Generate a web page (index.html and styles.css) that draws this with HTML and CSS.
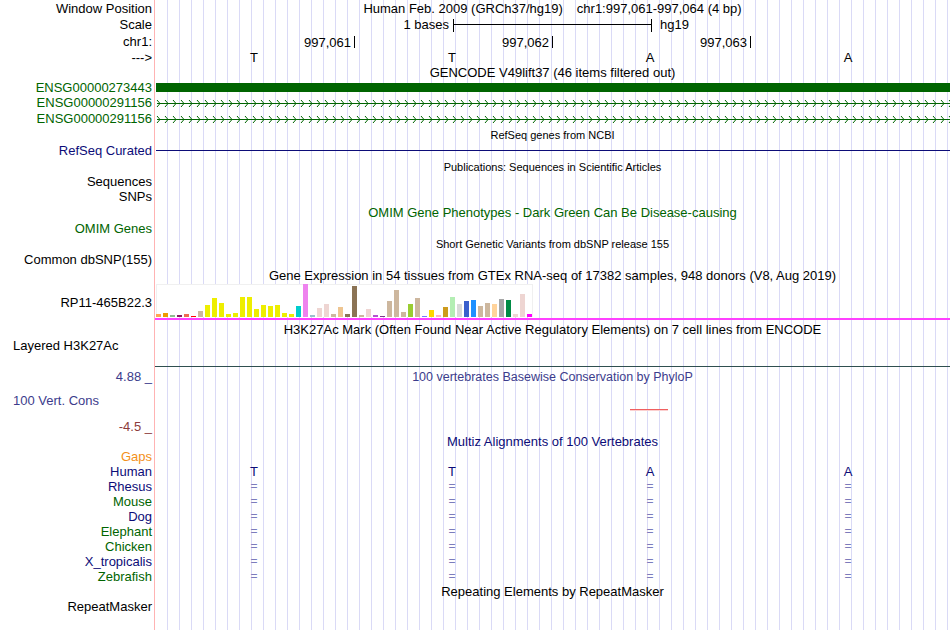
FILE: index.html
```html
<!DOCTYPE html>
<html>
<head>
    <meta charset="utf-8">
    <title>UCSC Genome Browser - chr1:997,061-997,064</title>
    <link rel="stylesheet" href="styles.css">
</head>
<body>
<div class="browser">
    <!-- cabecera: posicion, escala, regla -->
    <div class="row h17">
        <div class="label">Window Position</div>
        <div class="track title">Human Feb. 2009 (GRCh37/hg19)<span class="spacer"></span>chr1:997,061-997,064 (4 bp)</div>
    </div>
    <div class="row h16">
        <div class="label">Scale</div>
        <div class="track scale">
            <span class="scale-text">1 bases</span>
            <div class="scale-bar"></div>
            <span class="scale-db">hg19</span>
        </div>
    </div>
    <div class="row h18">
        <div class="label">chr1:</div>
        <div class="track ruler">
            <div class="pos">997,061<i class="tick"></i></div>
            <div class="pos">997,062<i class="tick"></i></div>
            <div class="pos">997,063<i class="tick"></i></div>
            <div></div>
        </div>
    </div>
    <div class="row h13">
        <div class="label">---&gt;</div>
        <div class="track bases"><span>T</span><span>T</span><span>A</span><span>A</span></div>
    </div>

    <!-- GENCODE -->
    <div class="row h17">
        <div class="label"></div>
        <div class="track title">GENCODE V49lift37 (46 items filtered out)</div>
    </div>
    <div class="row h14">
        <div class="label green">ENSG00000273443</div>
        <div class="track"><div class="gene-block"></div></div>
    </div>
    <div class="row h16">
        <div class="label green">ENSG00000291156</div>
        <div class="track">
            <svg class="gene-line" width="795" height="16">
                <defs>
                    <pattern id="chevrons" width="8" height="16" patternUnits="userSpaceOnUse">
                        <polyline points="2,5 5,8.5 2,12" fill="none" stroke="#006400" stroke-width="1"/>
                    </pattern>
                </defs>
                <rect x="2" y="8" width="793" height="1" fill="#006400"/>
                <rect x="0" y="0" width="795" height="16" fill="url(#chevrons)"/>
            </svg>
        </div>
    </div>
    <div class="row h16">
        <div class="label green">ENSG00000291156</div>
        <div class="track">
            <svg class="gene-line" width="795" height="16">
                <rect x="2" y="8" width="793" height="1" fill="#006400"/>
                <rect x="0" y="0" width="795" height="16" fill="url(#chevrons)"/>
            </svg>
        </div>
    </div>

    <!-- RefSeq -->
    <div class="row h16">
        <div class="label"></div>
        <div class="track title small">RefSeq genes from NCBI</div>
    </div>
    <div class="row h16">
        <div class="label navy">RefSeq Curated</div>
        <div class="track"><div class="refseq-line"></div></div>
    </div>

    <!-- Publications -->
    <div class="row h16">
        <div class="label"></div>
        <div class="track title small">Publications: Sequences in Scientific Articles</div>
    </div>
    <div class="row h14">
        <div class="label">Sequences</div>
        <div class="track"></div>
    </div>
    <div class="row h16">
        <div class="label">SNPs</div>
        <div class="track"></div>
    </div>

    <!-- OMIM -->
    <div class="row h16">
        <div class="label"></div>
        <div class="track title green">OMIM Gene Phenotypes - Dark Green Can Be Disease-causing</div>
    </div>
    <div class="row h15">
        <div class="label green">OMIM Genes</div>
        <div class="track"></div>
    </div>

    <!-- dbSNP -->
    <div class="row h16">
        <div class="label"></div>
        <div class="track title small">Short Genetic Variants from dbSNP release 155</div>
    </div>
    <div class="row h15">
        <div class="label">Common dbSNP(155)</div>
        <div class="track"></div>
    </div>

    <!-- GTEx -->
    <div class="row h17">
        <div class="label"></div>
        <div class="track title">Gene Expression in 54 tissues from GTEx RNA-seq of 17382 samples, 948 donors (V8, Aug 2019)</div>
    </div>
    <div class="row h37">
        <div class="label">RP11-465B22.3</div>
        <div class="track">
            <div class="gtex-plot" id="gtexPlot"></div>
            <div class="gtex-line"></div>
        </div>
    </div>

    <!-- H3K27Ac -->
    <div class="row h18">
        <div class="label"></div>
        <div class="track title">H3K27Ac Mark (Often Found Near Active Regulatory Elements) on 7 cell lines from ENCODE</div>
    </div>
    <div class="row h28">
        <div class="label left">Layered H3K27Ac</div>
        <div class="track h3k27ac"></div>
    </div>

    <!-- Conservacion -->
    <div class="row h20">
        <div class="label slate">4.88 _</div>
        <div class="track title slate narrow">100 vertebrates Basewise Conservation by PhyloP</div>
    </div>
    <div class="row h48">
        <div class="label cons-labels">
            <div class="left slate">100 Vert. Cons</div>
            <div class="cons-min">-4.5 _</div>
        </div>
        <div class="track"><div class="phylop-line"></div></div>
    </div>

    <!-- Multiz -->
    <div class="row h14">
        <div class="label"></div>
        <div class="track title navy">Multiz Alignments of 100 Vertebrates</div>
    </div>
    <div class="row h15">
        <div class="label orange">Gaps</div>
        <div class="track"></div>
    </div>
    <div class="row h15">
        <div class="label navy">Human</div>
        <div class="track bases navy"><span>T</span><span>T</span><span>A</span><span>A</span></div>
    </div>
    <div class="row h15">
        <div class="label navy">Rhesus</div>
        <div class="track bases eq"><span>=</span><span>=</span><span>=</span><span>=</span></div>
    </div>
    <div class="row h15">
        <div class="label green">Mouse</div>
        <div class="track bases eq"><span>=</span><span>=</span><span>=</span><span>=</span></div>
    </div>
    <div class="row h15">
        <div class="label navy">Dog</div>
        <div class="track bases eq"><span>=</span><span>=</span><span>=</span><span>=</span></div>
    </div>
    <div class="row h15">
        <div class="label green">Elephant</div>
        <div class="track bases eq"><span>=</span><span>=</span><span>=</span><span>=</span></div>
    </div>
    <div class="row h15">
        <div class="label green">Chicken</div>
        <div class="track bases eq"><span>=</span><span>=</span><span>=</span><span>=</span></div>
    </div>
    <div class="row h15">
        <div class="label navy">X_tropicalis</div>
        <div class="track bases eq"><span>=</span><span>=</span><span>=</span><span>=</span></div>
    </div>
    <div class="row h15">
        <div class="label green">Zebrafish</div>
        <div class="track bases eq"><span>=</span><span>=</span><span>=</span><span>=</span></div>
    </div>

    <!-- RepeatMasker -->
    <div class="row h16">
        <div class="label"></div>
        <div class="track title">Repeating Elements by RepeatMasker</div>
    </div>
    <div class="row h14">
        <div class="label">RepeatMasker</div>
        <div class="track"></div>
    </div>
    <div class="row h16">
        <div class="label"></div>
        <div class="track"></div>
    </div>
</div>

<script>
    // altura (px) y color de cada tejido GTEx
    const tissues = [
        [3, "#ffa54f"], [4, "#ee9a00"], [2, "#8fbc8f"], [2, "#8b1c62"], [3, "#ee6a50"],
        [1, "#ff0000"], [6, "#cdb79e"], [12, "#eeee00"], [19, "#eeee00"], [14, "#eeee00"],
        [3, "#eeee00"], [4, "#eeee00"], [20, "#eeee00"], [20, "#eeee00"], [8, "#eeee00"],
        [12, "#eeee00"], [11, "#eeee00"], [12, "#eeee00"], [4, "#eeee00"], [3, "#eeee00"],
        [11, "#00cdcd"], [33, "#ee82ee"], [2, "#9ac0cd"], [9, "#eed5d2"], [13, "#eed5d2"],
        [3, "#cdb79e"], [10, "#eec591"], [3, "#8b7355"], [31, "#8b7355"], [2, "#cdb79e"],
        [8, "#eed5d2"], [2, "#b452cd"], [1, "#7a378b"], [16, "#cdb79e"], [27, "#cdb79e"],
        [5, "#cdb79e"], [13, "#9acd32"], [19, "#cdb79e"], [1, "#7777ff"], [7, "#ffd700"],
        [2, "#ffb6c1"], [10, "#cd9b1d"], [20, "#b4eeb4"], [13, "#d9d9d9"], [16, "#3a5fcd"],
        [17, "#1e90ff"], [11, "#cdb79e"], [14, "#cdb79e"], [13, "#ffd39b"], [18, "#a6a6a6"],
        [17, "#008b45"], [3, "#eed5d2"], [23, "#eed5d2"], [3, "#ff00ff"]
    ];

    const plot = document.getElementById("gtexPlot");
    tissues.forEach(function (t) {
        const bar = document.createElement("div");
        bar.className = "gtex-bar";
        bar.style.height = t[0] + "px";
        bar.style.background = t[1];
        plot.appendChild(bar);
    });
</script>
</body>
</html>
```

FILE: styles.css
```css
body {
    margin: 0;
    background: #fff;
    color: #000;
    font-family: "Liberation Sans", Arial, sans-serif;
    font-size: 13px;
}

/* lineas guia cada 12px sobre el area de pistas */
.browser {
    width: 950px;
    background: repeating-linear-gradient(to right, #dadaf6 0 1px, transparent 1px 12px) 167px 0 / 783px 100% no-repeat;
}

.row {
    display: grid;
    grid-template-columns: 155px 795px;
    white-space: nowrap;
}

.h13 { height: 13px; line-height: 13px; }
.h14 { height: 14px; line-height: 14px; }
.h15 { height: 15px; line-height: 15px; }
.h16 { height: 16px; line-height: 16px; }
.h17 { height: 17px; line-height: 17px; }
.h18 { height: 18px; line-height: 18px; }
.h20 { height: 20px; line-height: 20px; }
.h28 { height: 28px; line-height: 14px; }
.h37 { height: 37px; line-height: 37px; }
.h48 { height: 48px; line-height: 14px; }

.label {
    border-right: 1px solid #ffb3b3;
    padding-right: 2px;
    text-align: right;
}

.left {
    text-align: left;
    padding-left: 13px;
}

.title {
    text-align: center;
}

.small {
    font-size: 11px;
}

.narrow {
    font-size: 12.5px;
}

.green { color: #006400; }
.navy { color: #0c0c78; }
.slate { color: #3c3c8c; }
.orange { color: #f39019; }

.spacer {
    display: inline-block;
    width: 14px;
}

/* escala */
.scale {
    display: grid;
    grid-template-columns: 1fr 199px 1fr;
}

.scale-text {
    text-align: right;
    padding-right: 4px;
}

.scale-db {
    padding-left: 8px;
}

.scale-bar {
    box-sizing: border-box;
    height: 13px;
    margin-top: 2px;
    border-left: 1px solid #000;
    border-right: 1px solid #000;
    background: linear-gradient(#000, #000) 0 5px / 100% 1px no-repeat;
}

/* regla de coordenadas */
.ruler {
    display: grid;
    grid-template-columns: 200px 198px 198px 1fr;
    line-height: 20px;
}

.pos {
    display: flex;
    justify-content: flex-end;
}

.tick {
    width: 1px;
    height: 12px;
    margin: 3px 0 0 3px;
    background: #000;
}

.bases {
    display: grid;
    grid-template-columns: repeat(4, 198px);
    text-align: center;
}

.bases.eq {
    color: #7c7cbc;
    font-size: 12px;
}

/* genes */
.gene-block {
    height: 9px;
    margin: 2px 0 0 1px;
    background: #006400;
}

.gene-line {
    display: block;
}

.refseq-line {
    height: 1px;
    margin: 7px 0 0 1px;
    background: #0c0c78;
}

/* GTEx */
.gtex-plot {
    box-sizing: border-box;
    display: flex;
    align-items: flex-end;
    gap: 2px;
    width: 377px;
    height: 33px;
    margin-left: 1px;
    background: #fff;
    box-shadow: inset 1px 1px #f0f0f0, inset -1px 0 #f0f0f0;
}

.gtex-bar {
    width: 5px;
    flex: none;
}

.gtex-line {
    height: 2px;
    margin-top: 1px;
    background: #ff40ff;
}

.h3k27ac {
    box-sizing: border-box;
    border-bottom: 1px solid #2f4f4f;
}

/* conservacion */
.cons-labels {
    padding-top: 7px;
    box-sizing: border-box;
}

.cons-min {
    margin-top: 12px;
    color: #8c3c3c;
}

.phylop-line {
    width: 38px;
    height: 1px;
    margin: 22px 0 0 475px;
    background: #f06060;
    box-shadow: 0 1px #fbd0d0;
}
```
